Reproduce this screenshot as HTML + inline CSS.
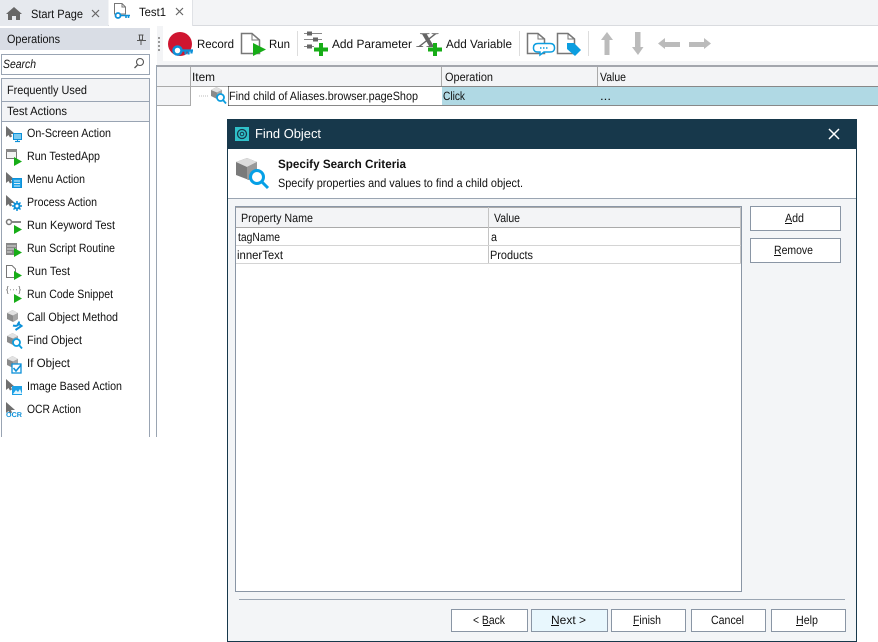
<!DOCTYPE html>
<html><head><meta charset="utf-8"><style>
html,body{margin:0;padding:0;background:#fff;width:878px;height:642px;overflow:hidden}
svg{display:block}
text{font-family:"Liberation Sans",sans-serif;font-size:12px;fill:#111;text-rendering:geometricPrecision}
</style></head><body>
<svg width="878" height="642" viewBox="0 0 878 642" xmlns="http://www.w3.org/2000/svg">
<defs>
<g id="cur"><path d="M0 0V11L2.500 9L4 11.500L6 10.500L5 8H9Z" fill="#6f6f6f"/></g>
<g id="play"><path d="M0 0L8 4.500L0 9Z" fill="#17ad17"/></g>
<g id="cube"><path d="M1 3L6.500 0L12 3V9L7 12L1 9Z" fill="#8a8a8a"/><path d="M1 3L6.500 0L12 3L7 5.500Z" fill="#e2e2e2"/><path d="M7 5.500V12L12 9V3Z" fill="#a6a6a6"/></g>
<g id="mag"><circle cx="4.500" cy="4.500" r="3.500" fill="#fff" stroke="#0c9ee0" stroke-width="1.800"/><path d="M7 7L10 10.500" stroke="#0c9ee0" stroke-width="1.800"/></g>
</defs>
<rect width="878" height="642" fill="#fff"/>
<!-- tab bar -->
<rect width="878" height="25" fill="#f3f4f6"/>
<rect y="25" width="878" height="1" fill="#d9dbdf"/>
<rect width="108" height="26" fill="#e6e9ee"/>
<rect x="109" width="84" height="28" fill="#fff"/>
<rect x="192" width="1" height="26" fill="#e0e2e6"/>
<path d="M6 14L14 7L22 14H20V20H16V16H12V20H8V14Z" fill="#666"/>
<text x="31" y="18" textLength="52" lengthAdjust="spacingAndGlyphs">Start Page</text>
<path d="M92 10L99 17M99 10L92 17" stroke="#666" stroke-width="1.200"/>
<path d="M114.500 3.500H122L125.500 7V14H114.500Z" fill="#fff" stroke="#777"/>
<path d="M122 3.500V7H125.500" fill="none" stroke="#777"/>
<circle cx="118" cy="15.500" r="2.500" fill="#fff" stroke="#0c90d8" stroke-width="1.800"/>
<path d="M120 15.500H130M126 15.500V18M128.500 15.500V18" stroke="#0c90d8" stroke-width="1.600"/>
<text x="139" y="16" textLength="27" lengthAdjust="spacingAndGlyphs">Test1</text>
<path d="M176 8L183 15M183 8L176 15" stroke="#666" stroke-width="1.200"/>
<!-- Operations panel -->
<rect y="28" width="150" height="22" fill="#d9dde5"/>
<text x="7" y="43" textLength="53" lengthAdjust="spacingAndGlyphs">Operations</text>
<path d="M138.500 35H143.500M139.500 35V40H142.500V35M137 40.500H146M141 41V45" stroke="#555" fill="none"/>
<rect x="1.500" y="54.500" width="148" height="20" fill="#fff" stroke="#99a4b3"/>
<text x="3" y="68" font-style="italic" textLength="33" lengthAdjust="spacingAndGlyphs">Search</text>
<circle cx="140" cy="62" r="3.500" fill="none" stroke="#555" stroke-width="1.100"/>
<path d="M137.500 65L134.500 68" stroke="#555" stroke-width="1.300"/>
<rect x="1.500" y="78.500" width="148" height="23" fill="#f3f4f6" stroke="#99a4b3"/>
<text x="7" y="94" textLength="80" lengthAdjust="spacingAndGlyphs">Frequently Used</text>
<rect x="1.500" y="101.500" width="148" height="20" fill="#f3f4f6" stroke="#99a4b3"/>
<text x="7" y="115" textLength="60" lengthAdjust="spacingAndGlyphs">Test Actions</text>
<rect x="1" y="121" width="1" height="316" fill="#99a4b3"/>
<rect x="149" y="121" width="1" height="316" fill="#99a4b3"/>
<rect x="156" y="65" width="1" height="372" fill="#9aa5b2"/>
<g>
<text x="27" y="137" textLength="84" lengthAdjust="spacingAndGlyphs">On-Screen Action</text>
<text x="27" y="160" textLength="73" lengthAdjust="spacingAndGlyphs">Run TestedApp</text>
<text x="27" y="183" textLength="58" lengthAdjust="spacingAndGlyphs">Menu Action</text>
<text x="27" y="206" textLength="70" lengthAdjust="spacingAndGlyphs">Process Action</text>
<text x="27" y="229" textLength="88" lengthAdjust="spacingAndGlyphs">Run Keyword Test</text>
<text x="27" y="252" textLength="88" lengthAdjust="spacingAndGlyphs">Run Script Routine</text>
<text x="27" y="275" textLength="43" lengthAdjust="spacingAndGlyphs">Run Test</text>
<text x="27" y="298" textLength="86" lengthAdjust="spacingAndGlyphs">Run Code Snippet</text>
<text x="27" y="321" textLength="91" lengthAdjust="spacingAndGlyphs">Call Object Method</text>
<text x="27" y="344" textLength="55" lengthAdjust="spacingAndGlyphs">Find Object</text>
<text x="27" y="367" textLength="43" lengthAdjust="spacingAndGlyphs">If Object</text>
<text x="27" y="390" textLength="95" lengthAdjust="spacingAndGlyphs">Image Based Action</text>
<text x="27" y="413" textLength="54" lengthAdjust="spacingAndGlyphs">OCR Action</text>
</g>
<!-- list icons -->
<use href="#cur" x="6" y="126"/>
<rect x="13.500" y="133.500" width="8" height="6" fill="#7ccbf0" stroke="#0c90d8"/><path d="M15 141.500H20" stroke="#0c90d8" stroke-width="1.200"/><path d="M17.500 139V142" stroke="#0c90d8"/>
<rect x="6.500" y="149.500" width="10" height="9" fill="#f3f3f3" stroke="#777"/><rect x="6" y="149" width="11" height="3" fill="#888"/>
<use href="#play" x="14" y="157"/>
<use href="#cur" x="6" y="172"/>
<rect x="12.500" y="178.500" width="9" height="9" fill="#1da1e6" stroke="#0c90d8"/><path d="M14 181H20M14 183.500H20M14 186H20" stroke="#d8f0fb"/>
<use href="#cur" x="6" y="195"/>
<path d="M17 201V211M12 206H22M13.500 202.500L20.500 209.500M20.500 202.500L13.500 209.500" stroke="#0c90d8" stroke-width="1.500"/>
<circle cx="17" cy="206" r="3.500" fill="#0c90d8"/><circle cx="17" cy="206" r="1.500" fill="#fff"/>
<circle cx="9" cy="222" r="2.500" fill="none" stroke="#777" stroke-width="1.500"/><path d="M11.500 222H21" stroke="#888" stroke-width="2"/>
<use href="#play" x="14" y="225"/>
<rect x="6" y="243" width="11" height="12" fill="#888"/><path d="M7 246H16M7 249H16M7 252H12" stroke="#ddd"/>
<use href="#play" x="14" y="248"/>
<path d="M6.500 265.500H12L15.500 269V277.500H6.500Z" fill="#fff" stroke="#777"/>
<use href="#play" x="14" y="271"/>
<text x="6" y="292" style="font-size:8px;fill:#555" textLength="15">{···}</text>
<use href="#play" x="14" y="294"/>
<use href="#cube" x="6" y="310"/>
<path d="M13 325.500C16.500 326.500 19 325.500 19 321.500M17.500 323L21.500 326L15.500 330" fill="none" stroke="#0c90d8" stroke-width="2"/>
<use href="#cube" x="6" y="333"/>
<use href="#mag" x="12" y="338"/>
<use href="#cube" x="6" y="356"/>
<rect x="12" y="364" width="9" height="9" fill="#fff" stroke="#0c90d8" stroke-width="1.300"/><path d="M13.500 368L16 371L21 365" fill="none" stroke="#0c90d8" stroke-width="1.600"/>
<use href="#cur" x="6" y="379"/>
<rect x="12" y="386" width="10" height="9" fill="#1da1e6"/><path d="M13 394L16 390L18 392L20 389L22 394Z" fill="#e3f5fd"/>
<use href="#cur" x="6" y="402"/>
<text x="6" y="417" style="font-size:7px;font-weight:bold;fill:#0c90d8" textLength="16" lengthAdjust="spacingAndGlyphs">OCR</text>
<!-- toolbar -->
<rect x="157" y="26" width="721" height="35" fill="#fff"/>
<rect x="157" y="61" width="721" height="4" fill="#f4f5f7"/>
<rect x="157" y="26" width="6" height="35" fill="#f3f4f6"/>
<path d="M159 37V39M159 41V43M159 45V47M159 49V51" stroke="#999" stroke-width="2"/>
<circle cx="180" cy="44" r="12" fill="#cf1530"/>
<circle cx="177.500" cy="50.500" r="4" fill="#fff" stroke="#0c90d8" stroke-width="2.500"/>
<path d="M181 50.500H193M185.500 50.500V54.500M188.500 50.500V54.500M191.500 50.500V53.500" stroke="#0c90d8" stroke-width="2.200"/>
<text x="197" y="48" textLength="37" lengthAdjust="spacingAndGlyphs">Record</text>
<path d="M241.500 33.500H252L259.500 40V53.500H241.500Z" fill="#fff" stroke="#777" stroke-width="1.500"/>
<path d="M252 33.500V40H259.500" fill="none" stroke="#777"/>
<path d="M253 43L266 49.500L253 56Z" fill="#17ad17"/>
<text x="269" y="48" textLength="21" lengthAdjust="spacingAndGlyphs">Run</text>
<rect x="297" y="31" width="1" height="25" fill="#ddd"/>
<path d="M304 33.500H322M304 39.500H322M304 46.500H314" stroke="#888"/>
<rect x="307" y="31.500" width="5" height="4" fill="#666"/><rect x="313" y="37.500" width="5" height="4" fill="#666"/><rect x="307" y="44.500" width="5" height="4" fill="#666"/>
<path d="M321 43V56M314 49.500H328" stroke="#17ad17" stroke-width="4"/>
<text x="332" y="48" textLength="80" lengthAdjust="spacingAndGlyphs">Add Parameter</text>
<text x="417" y="47" textLength="21" lengthAdjust="spacingAndGlyphs" style="font-family:'Liberation Serif',serif;font-size:21px;font-weight:bold;font-style:italic;fill:#666">X</text>
<path d="M435 43V56M428 49.500H442" stroke="#17ad17" stroke-width="4"/>
<text x="446" y="48" textLength="66" lengthAdjust="spacingAndGlyphs">Add Variable</text>
<rect x="519" y="31" width="1" height="25" fill="#ddd"/>
<path d="M527.500 33.500H538L544.500 39V53.500H527.500Z" fill="#fff" stroke="#777" stroke-width="1.500"/>
<path d="M538 33.500V39H544.500" fill="none" stroke="#777"/>
<path d="M538 43.500H550C553 43.500 554.500 45 554.500 47.500V48.500C554.500 50.500 553 52 550 52H544L540 55V52H538C535 52 533.500 50.500 533.500 48.500V47.500C533.500 45 535 43.500 538 43.500Z" fill="#fff" stroke="#0c9ee0" stroke-width="1.500"/>
<path d="M540 48H549" stroke="#0c9ee0" stroke-width="1.500" stroke-dasharray="1.500 1.500"/>
<path d="M557.500 33.500H568L574.500 39V53.500H557.500Z" fill="#fff" stroke="#777" stroke-width="1.500"/>
<path d="M568 33.500V39H574.500" fill="none" stroke="#777"/>
<path d="M567 43H574L581 50L575 56L567 49Z" fill="#0c9ee0"/>
<rect x="588" y="31" width="1" height="25" fill="#ddd"/>
<path d="M607 32L613 40H609.500V55H604.500V40H601Z" fill="#bbb"/>
<path d="M635 32H640.500V47H643.500L638 55L632 47H635Z" fill="#bbb"/>
<path d="M658 43.500L665 38V42H680V47H665V49Z" fill="#bbb"/>
<path d="M711 43.500L704 38V42H689V47H704V49Z" fill="#bbb"/>
<!-- grid -->
<rect x="157" y="65" width="721" height="2" fill="#a3a6ad"/>
<rect x="157" y="67" width="721" height="19" fill="#f3f4f6"/>
<rect x="157" y="87" width="33" height="18" fill="#f3f4f6"/>
<rect x="157" y="105" width="33" height="1" fill="#aaa"/>
<rect x="190" y="67" width="1" height="39" fill="#aaa"/>
<rect x="441" y="67" width="1" height="19" fill="#aaa"/>
<rect x="597" y="67" width="1" height="19" fill="#aaa"/>
<rect x="157" y="86" width="71" height="1" fill="#aaa"/>
<text x="192" y="81" textLength="23" lengthAdjust="spacingAndGlyphs">Item</text>
<text x="445" y="81" textLength="48" lengthAdjust="spacingAndGlyphs">Operation</text>
<text x="600" y="81" textLength="26" lengthAdjust="spacingAndGlyphs">Value</text>
<rect x="442" y="87" width="436" height="18" fill="#b0d9e4"/>
<path d="M199 96H208" stroke="#bbb" stroke-dasharray="1 1"/>
<use href="#cube" x="210" y="87"/>
<use href="#mag" x="216" y="93"/>
<path d="M228.500 86.500H878M228.500 105.500H878M228.500 86.500V105.500" stroke="#111" stroke-dasharray="1 1" fill="none"/>
<text x="229" y="100" textLength="189" lengthAdjust="spacingAndGlyphs">Find child of Aliases.browser.pageShop</text>
<text x="443" y="100" textLength="22" lengthAdjust="spacingAndGlyphs">Click</text>
<text x="600" y="100" textLength="11" lengthAdjust="spacingAndGlyphs">...</text>
<!-- dialog -->
<rect x="227" y="119" width="630" height="523" fill="#17384b"/>
<rect x="228" y="149" width="628" height="492" fill="#f3f5f7"/>
<rect x="228" y="149" width="628" height="49" fill="#fff"/>
<rect x="228" y="198" width="628" height="1" fill="#9aa5b2"/>
<rect x="235" y="127" width="14" height="14" fill="#2fc0c9"/>
<circle cx="242" cy="134" r="4.500" fill="none" stroke="#17384b" stroke-width="1.300"/><circle cx="242" cy="134" r="1.800" fill="none" stroke="#17384b"/>
<text x="255" y="138" textLength="66" lengthAdjust="spacingAndGlyphs" style="fill:#fff;font-size:13px">Find Object</text>
<path d="M829 129L839 139M839 129L829 139" stroke="#fff" stroke-width="1.500"/>
<!-- dialog header -->
<path d="M236 162L247 158L257 162V172L249 180L236 175Z" fill="#7a7a7a"/>
<path d="M236 162L247 158L257 162L247 167Z" fill="#dcdcdc"/>
<path d="M247 167V180L257 172V162Z" fill="#999"/>
<circle cx="257" cy="177" r="6.500" fill="#fff" stroke="#06a0e6" stroke-width="3"/>
<path d="M262 182L268 188" stroke="#06a0e6" stroke-width="3"/>
<text x="278" y="168" font-weight="bold" textLength="128" lengthAdjust="spacingAndGlyphs">Specify Search Criteria</text>
<text x="278" y="187" textLength="245" lengthAdjust="spacingAndGlyphs">Specify properties and values to find a child object.</text>
<!-- table -->
<rect x="235.500" y="206.500" width="506" height="385" fill="#fff" stroke="#8a96a5"/>
<rect x="236" y="207" width="505" height="20" fill="#f3f4f6"/>
<rect x="236" y="207" width="505" height="1" fill="#aaa"/>
<rect x="236" y="227" width="505" height="1" fill="#aaa"/>
<rect x="488" y="207" width="1" height="57" fill="#c4c4c4"/>
<rect x="740" y="207" width="1" height="57" fill="#c4c4c4"/>
<rect x="236" y="245" width="505" height="1" fill="#d4d4d4"/>
<rect x="236" y="263" width="505" height="1" fill="#d4d4d4"/>
<text x="241" y="222" textLength="72" lengthAdjust="spacingAndGlyphs">Property Name</text>
<text x="494" y="222" textLength="26" lengthAdjust="spacingAndGlyphs">Value</text>
<text x="238" y="241" textLength="42" lengthAdjust="spacingAndGlyphs">tagName</text>
<text x="491" y="241" textLength="6" lengthAdjust="spacingAndGlyphs">a</text>
<text x="237" y="259" textLength="46" lengthAdjust="spacingAndGlyphs">innerText</text>
<text x="490" y="259" textLength="43" lengthAdjust="spacingAndGlyphs">Products</text>
<!-- right buttons -->
<rect x="750.500" y="206.500" width="90" height="24" fill="#fff" stroke="#8a96a5"/>
<rect x="750.500" y="238.500" width="90" height="24" fill="#fff" stroke="#8a96a5"/>
<text x="785" y="222" textLength="19" lengthAdjust="spacingAndGlyphs">Add</text><path d="M785 223.500H792" stroke="#111"/>
<text x="774" y="254" textLength="39" lengthAdjust="spacingAndGlyphs">Remove</text><path d="M774 255.500H781" stroke="#111"/>
<!-- footer -->
<rect x="239" y="599" width="606" height="1" fill="#9aa5b2"/>
<rect x="451.500" y="609.500" width="76" height="22" fill="#fff" stroke="#8a96a5"/>
<rect x="531.500" y="609.500" width="76" height="22" fill="#e8f7fd" stroke="#8a96a5"/>
<rect x="611.500" y="609.500" width="74" height="22" fill="#fff" stroke="#8a96a5"/>
<rect x="691.500" y="609.500" width="74" height="22" fill="#fff" stroke="#8a96a5"/>
<rect x="771.500" y="609.500" width="74" height="22" fill="#fff" stroke="#8a96a5"/>
<text x="473" y="624" textLength="32" lengthAdjust="spacingAndGlyphs">&lt; Back</text><path d="M483 625.500H490" stroke="#111"/>
<text x="551" y="624" textLength="35" lengthAdjust="spacingAndGlyphs">Next &gt;</text><path d="M551 625.500H559" stroke="#111"/>
<text x="633" y="624" textLength="28" lengthAdjust="spacingAndGlyphs">Finish</text><path d="M633 625.500H639" stroke="#111"/>
<text x="711" y="624" textLength="33" lengthAdjust="spacingAndGlyphs">Cancel</text>
<text x="796" y="624" textLength="22" lengthAdjust="spacingAndGlyphs">Help</text><path d="M796 625.500H803" stroke="#111"/>
</svg>
</body></html>
